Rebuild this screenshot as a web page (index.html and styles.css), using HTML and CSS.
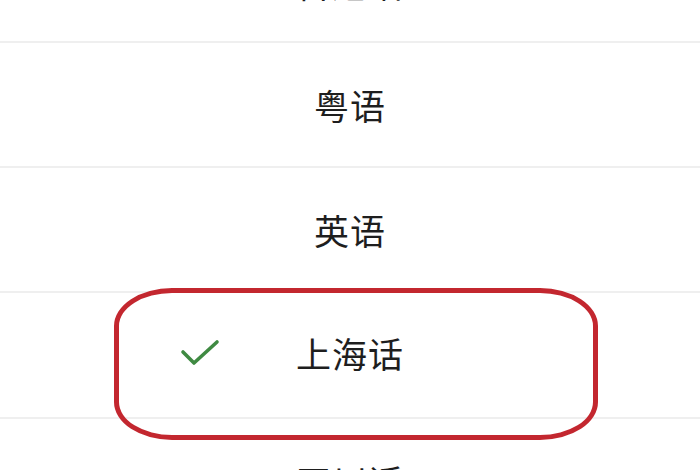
FILE: index.html
```html
<!DOCTYPE html>
<html lang="zh-CN">
<head>
<meta charset="utf-8">
<link rel="stylesheet" href="styles.css">
</head>
<body>
<div class="screen">
  <ul class="list">
    <li class="row row-first"><span class="side"></span><span class="label">普通话</span><span class="side"></span></li>
    <li class="row"><span class="side"></span><span class="label">粤语</span><span class="side"></span></li>
    <li class="row"><span class="side"></span><span class="label">英语</span><span class="side"></span></li>
    <li class="row row-selected">
      <span class="side side-check">
        <svg class="check" width="40" height="30" viewBox="0 0 40 30"><polyline points="3,13 14,24 37,3" fill="none" stroke="#3f8a42" stroke-width="3.6" stroke-linecap="round" stroke-linejoin="round"/></svg>
      </span>
      <span class="label">上海话</span><span class="side"></span>
    </li>
    <li class="row"><span class="side"></span><span class="label">四川话</span><span class="side"></span></li>
  </ul>
  <div class="mark"></div>
</div>
</body>
</html>
```
FILE: styles.css
```css
html, body {
  margin: 0;
  padding: 0;
  background: #ffffff;
}
.screen {
  position: relative;
  width: 700px;
  height: 470px;
  overflow: hidden;
  background: #ffffff;
  font-family: "Noto Sans CJK SC", "Noto Sans", sans-serif;
}
.list {
  list-style: none;
  margin: -76px 0 0 0;
  padding: 0;
}
.row {
  display: grid;
  grid-template-columns: 1fr auto 1fr;
  align-items: center;
  height: 123px;
  border-bottom: 2px solid #efefef;
}
.row-first {
  height: 117px;
}
.row-selected {
  box-sizing: border-box;
  height: 126px;
  padding-bottom: 6px;
}
.label {
  font-size: 35px;
  line-height: 1;
  color: #1e1e1e;
  letter-spacing: 1px;
  text-align: center;
}
.side-check {
  justify-self: end;
  margin-right: 76px;
  display: flex;
  align-items: center;
}
.check {
  display: block;
  margin-top: 4px;
}
.mark {
  position: absolute;
  left: 114px;
  top: 288px;
  width: 474px;
  height: 142px;
  border: 5px solid #c3272f;
  border-radius: 58px / 38px;
}
```
